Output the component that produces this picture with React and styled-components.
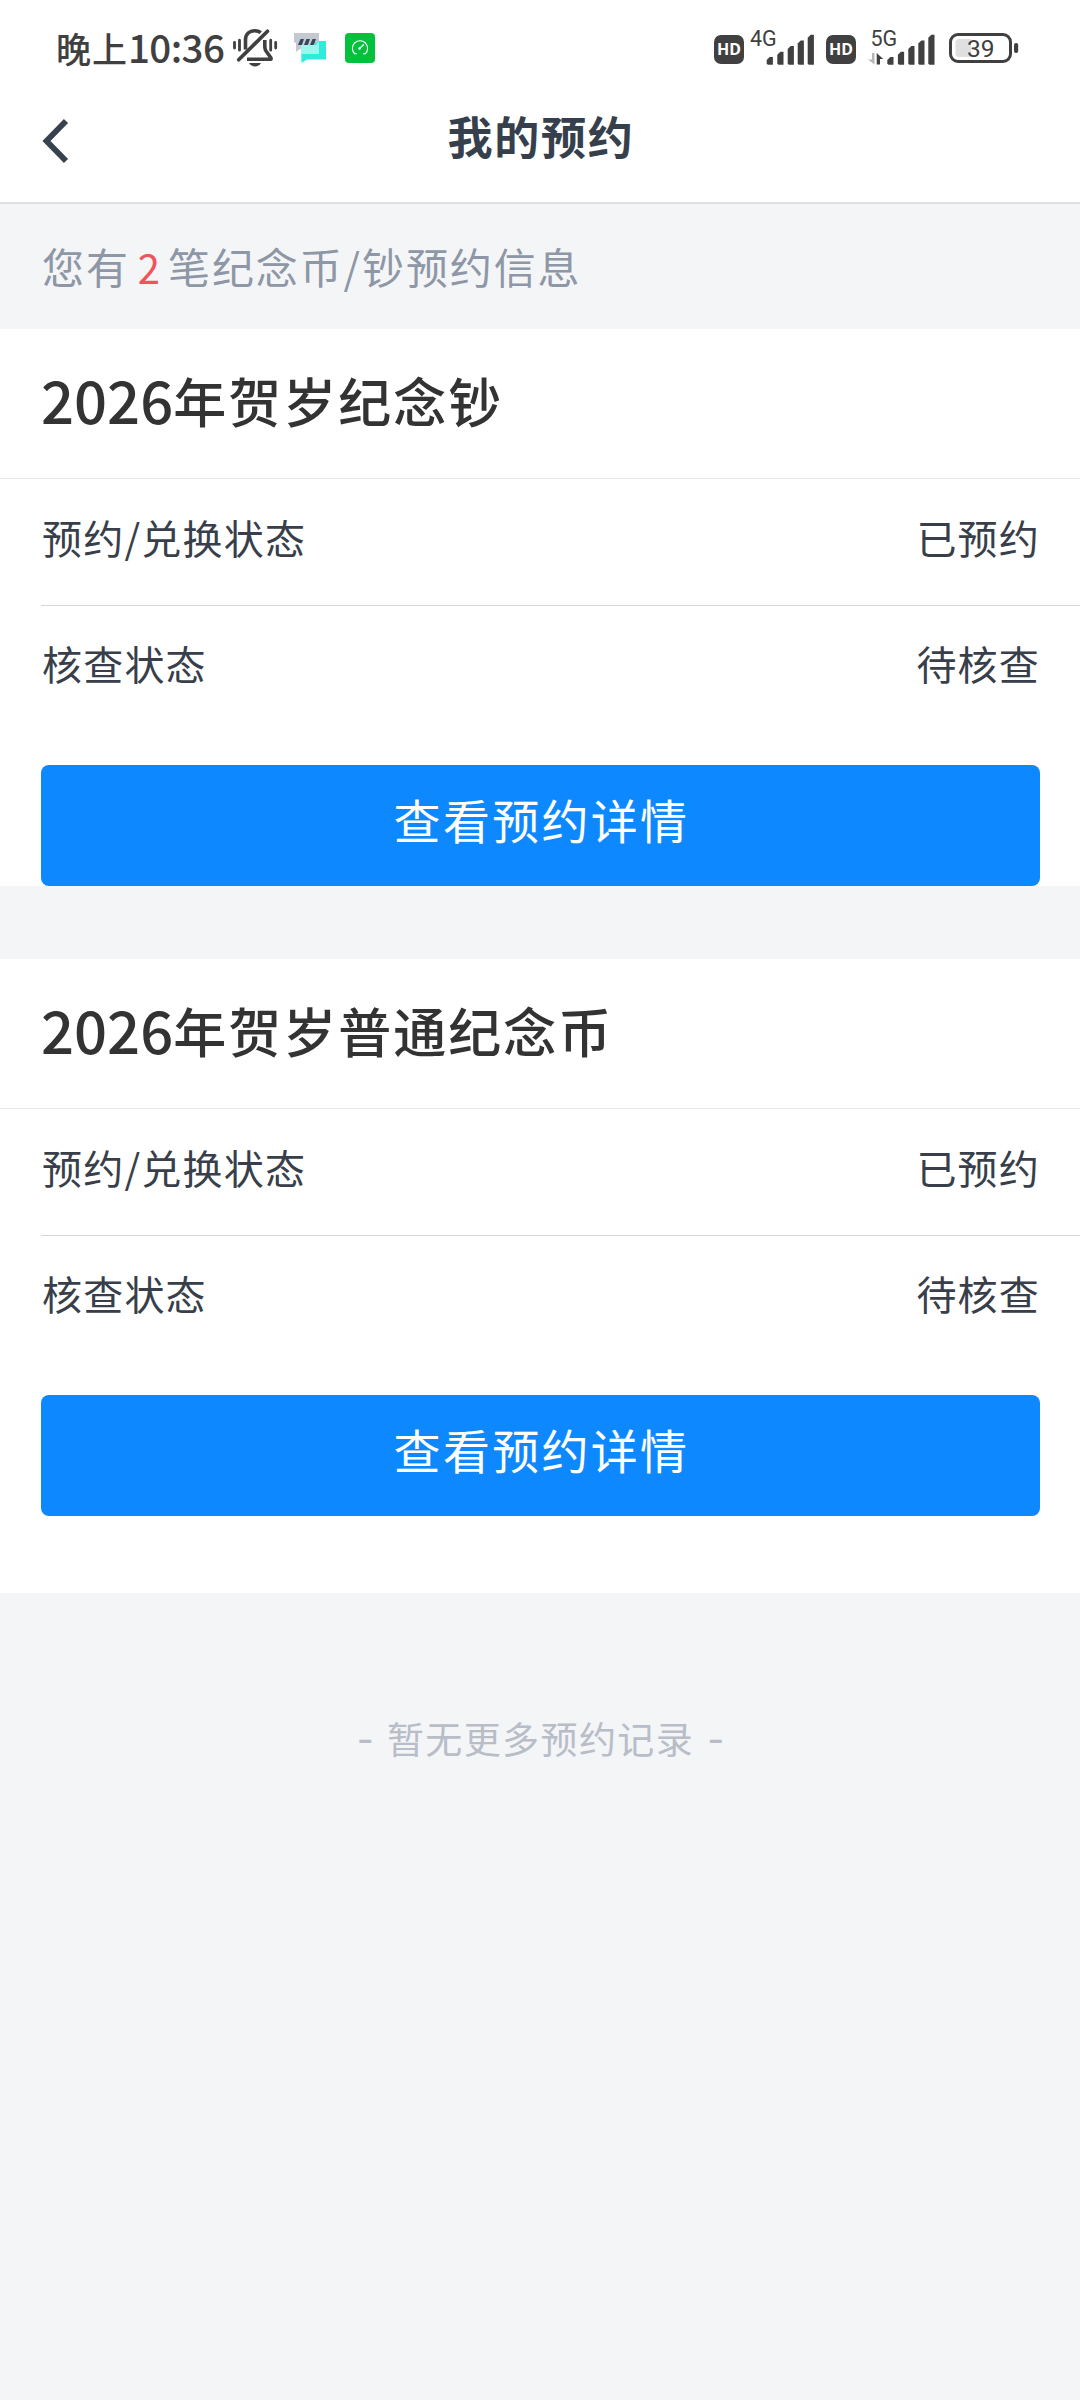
import styled, { createGlobalStyle } from "styled-components";

const GlobalStyle = createGlobalStyle`
  * {
    box-sizing: border-box;
  }
  body {
    margin: 0;
    background: #f4f5f7;
    font-family: "Noto Sans CJK SC", sans-serif;
    color: #383f4a;
  }
`;
const Page = styled.div`
  width: 1080px;
  min-height: 2400px;
  display: flex;
  flex-direction: column;
  background: #f4f5f7;
`;
const StatusBar = styled.div`
  height: 96px;
  padding: 0 61px 0 56px;
  display: flex;
  align-items: center;
  justify-content: space-between;
  background: #fff;
  color: #404040;
`;
const StatusGroup = styled.div`
  display: flex;
  align-items: center;
`;
const Clock = styled.div`
  width: 176px;
  display: flex;
  align-items: baseline;
  line-height: 50px;
  padding-bottom: 2px;
  white-space: nowrap;
`;
const Period = styled.span`
  font-size: 35px;
  font-weight: 500;
  letter-spacing: 1px;
`;
const Time = styled.span`
  font-size: 38.5px;
  font-weight: 500;
  letter-spacing: -0.6px;
`;
const Icon = styled.svg`
  display: block;
  flex: none;
  overflow: visible;
  margin-left: ${(props) => props.$gap || 0}px;
`;
const HdBadge = styled.span`
  width: 30px;
  height: 29px;
  margin-top: 2px;
  margin-left: ${(props) => props.$gap || 0}px;
  padding-bottom: 1px;
  display: flex;
  align-items: center;
  justify-content: center;
  border-radius: 7px;
  background: #404040;
  color: #fff;
  font: 700 16px/24px "Noto Sans", sans-serif;
`;
const Header = styled.header`
  height: 108px;
  padding: 0 42px;
  display: grid;
  grid-template-columns: 60px 1fr 60px;
  align-items: center;
  background: #fff;
  border-bottom: 2px solid #e0e0e0;
`;
const BackButton = styled.button`
  height: 106px;
  padding: 22px 0 0;
  display: flex;
  align-items: flex-start;
  border: none;
  background: none;
  cursor: pointer;
`;
const HeaderTitle = styled.h1`
  margin: 0;
  padding: 0 0 26px 2px;
  text-align: center;
  color: #36404c;
  font-size: 45px;
  font-weight: 700;
  line-height: 60px;
  letter-spacing: 1.7px;
`;
const Notice = styled.p`
  margin: 0;
  height: 125px;
  padding: 0 42px 2px;
  display: flex;
  align-items: center;
  color: #8e97a6;
  font-size: 42px;
  letter-spacing: 1.9px;
`;
const Count = styled.span`
  margin: 0 8px 0 8px;
  padding-top: 2px;
  color: #f05359;
  font-size: 40px;
  letter-spacing: 0;
`;
const Card = styled.section`
  background: #fff;
  margin-bottom: ${(props) => (props.$last ? 0 : 73)}px;
  padding-bottom: ${(props) => (props.$last ? 77 : 0)}px;
`;
const CardTitle = styled.h2`
  margin: 0;
  height: 150px;
  padding: 0 41px 8px;
  display: flex;
  align-items: center;
  border-bottom: 1px solid #e6e6e6;
  color: #333;
  font-size: 53px;
  font-weight: 500;
  letter-spacing: 2px;
`;
const Year = styled.span`
  padding-bottom: 1px;
  font-size: 58px;
  letter-spacing: 0;
`;
const Row = styled.div`
  height: 127px;
  margin-left: 41px;
  padding: 0 40px ${(props) => (props.$line ? 11 : 13)}px 1px;
  display: flex;
  align-items: center;
  justify-content: space-between;
  font-size: 40px;
  letter-spacing: 1.2px;
  border-bottom: 1px solid ${(props) => (props.$line ? "#d4d6d9" : "#fff")};
`;
const DetailButton = styled.button`
  width: 999px;
  height: 121px;
  margin: 32px 40px 0 41px;
  padding: 0 0 14px 2px;
  display: block;
  border: none;
  border-radius: 8px;
  background: #0e88ff;
  color: #fff;
  font-family: inherit;
  font-size: 47px;
  letter-spacing: 2.3px;
  cursor: pointer;
`;
const Footer = styled.p`
  margin: 0;
  padding: 117px 0 0 1px;
  text-align: center;
  color: #b8bdc7;
  font-size: 37px;
  line-height: 56px;
  letter-spacing: 1.4px;
  word-spacing: 4px;
`;
const Dash = styled.span`
  font-size: 46px;
  line-height: 40px;
  letter-spacing: 0;
`;

const reservations = [
  { year: "2026", name: "年贺岁纪念钞", status: "已预约", check: "待核查" },
  { year: "2026", name: "年贺岁普通纪念币", status: "已预约", check: "待核查" },
];

function MutedBell() {
  return (
    <Icon width="46" height="40" viewBox="0 0 46 40" fill="none" stroke="#404040" strokeWidth="3.6">
      <path d="M13.5 21.5V12C13.5 6 17.5 2.7 22.8 2.7c2.4 0 4.5.7 6 1.9" />
      <path d="M32.8 12v6.5c0 2 .4 3.3 1.4 4.8L39 30v1.3H15" strokeLinejoin="round" />
      <path d="M35.5 3.2 6.7 31.8" strokeLinecap="round" />
      <path d="M17 35h12c-1.3 2.4-3.5 3.4-6 3.4s-4.7-1-6-3.4z" fill="#404040" stroke="none" />
      <path d="M2.5 14.5V20M7.5 12.2v10M38.7 12.2v10M43.7 14.5V20" strokeWidth="2.8" strokeLinecap="round" />
    </Icon>
  );
}

function ChatIcon() {
  return (
    <Icon $gap={15} width="33" height="32" viewBox="0 0 33 32">
      <path d="M1 1h25v16H7l-4 3v-9L1 10z" fill="#c5c7d1" />
      <path d="M7.5 7H11l-2.200 6H5zM13.500 7H17l-2.200 6H11zM19.500 7H23l-2.200 6H17z" fill="#31475a" />
      <path d="M8 13h12l6-4h7v18.500H14L8.500 31z" fill="#2febdc" />
      <path d="M8 13h15l3-4v13H8z" fill="#9df5ee" />
    </Icon>
  );
}

function GaugeIcon() {
  return (
    <Icon $gap={19} width="30" height="30" viewBox="0 0 30 30" fill="none" stroke="#fff">
      <rect width="30" height="30" rx="4" fill="#04c13c" stroke="none" />
      <path d="M12 20.8H9.7a7.6 7.6 0 1 1 10.6 0H18" strokeWidth="1.1" />
      <path d="m14.5 15.5 4.3-4" strokeWidth="1.3" />
      <circle cx="14.5" cy="15.5" r="1.2" fill="#fff" stroke="none" />
    </Icon>
  );
}

function Signal({ label, gap, labelX, barsX, width, data }) {
  const bars = [0, 10.6, 21, 31, 41];
  const tops = [27, 21.7, 16, 10.4, 4.7];
  return (
    <Icon $gap={gap} width={width} height="36" viewBox={`0 0 ${width} 36`} fill="#404040">
      <text x={labelX} y="16" fontSize="21.5" fontFamily="Roboto, sans-serif">
        {label}
      </text>
      {bars.map((x, i) => (
        <path
          key={x}
          d={`M${barsX + x} 33.5V${tops[i] + 3}l3-3H${barsX + x + 6.2}V34.7H${barsX + x + 1}z`}
        />
      ))}
      {data && (
        <>
          <path d="M4 23h2.500v11.500L0 29.500h4z" fill="#b5b5b5" />
          <path d="M8.700 34.500V23l6.500 6H12v5.500z" />
        </>
      )}
    </Icon>
  );
}

function Battery() {
  return (
    <Icon $gap={14} width="70" height="30" viewBox="0 0 70 30">
      <rect x="1.5" y="1.5" width="60" height="27" rx="7.5" fill="none" stroke="#404040" strokeWidth="3" />
      <path d="M10 6h12v18H10a3.5 3.5 0 0 1-3.5-3.5v-11A3.5 3.5 0 0 1 10 6z" fill="#e0e0e0" />
      <rect x="65" y="10" width="4.2" height="10" rx="2" fill="#404040" />
      <text x="18" y="23.8" fontSize="24.5" fill="#404040" fontFamily="Roboto, sans-serif">
        39
      </text>
    </Icon>
  );
}

function Reservation({ item, last }) {
  return (
    <Card $last={last}>
      <CardTitle>
        <Year>{item.year}</Year>
        {item.name}
      </CardTitle>
      <Row $line>
        <span>预约/兑换状态</span>
        <span>{item.status}</span>
      </Row>
      <Row>
        <span>核查状态</span>
        <span>{item.check}</span>
      </Row>
      <DetailButton type="button">查看预约详情</DetailButton>
    </Card>
  );
}

export default function App() {
  return (
    <>
      <GlobalStyle />
      <Page>
        <StatusBar>
          <StatusGroup>
            <Clock>
              <Period>晚上</Period>
              <Time>10:36</Time>
            </Clock>
            <MutedBell />
            <ChatIcon />
            <GaugeIcon />
          </StatusGroup>
          <StatusGroup>
            <HdBadge>HD</HdBadge>
            <Signal label="4G" gap={6} labelX={0} barsX={16.7} width={65} />
            <HdBadge $gap={11}>HD</HdBadge>
            <Signal label="5G" gap={12} labelX={2.5} barsX={19.3} width={67} data />
            <Battery />
          </StatusGroup>
        </StatusBar>
        <Header>
          <BackButton type="button">
            <Icon width="28" height="46" viewBox="0 0 28 46" fill="none" stroke="#36424e" strokeWidth="5.8">
              <path d="M24 3 4.5 23 24 43" />
            </Icon>
          </BackButton>
          <HeaderTitle>我的预约</HeaderTitle>
        </Header>
        <Notice>
          您有<Count>2</Count>笔纪念币/钞预约信息
        </Notice>
        {reservations.map((item, i) => (
          <Reservation key={item.name} item={item} last={i === reservations.length - 1} />
        ))}
        <Footer>
          <Dash>-</Dash> 暂无更多预约记录 <Dash>-</Dash>
        </Footer>
      </Page>
    </>
  );
}
